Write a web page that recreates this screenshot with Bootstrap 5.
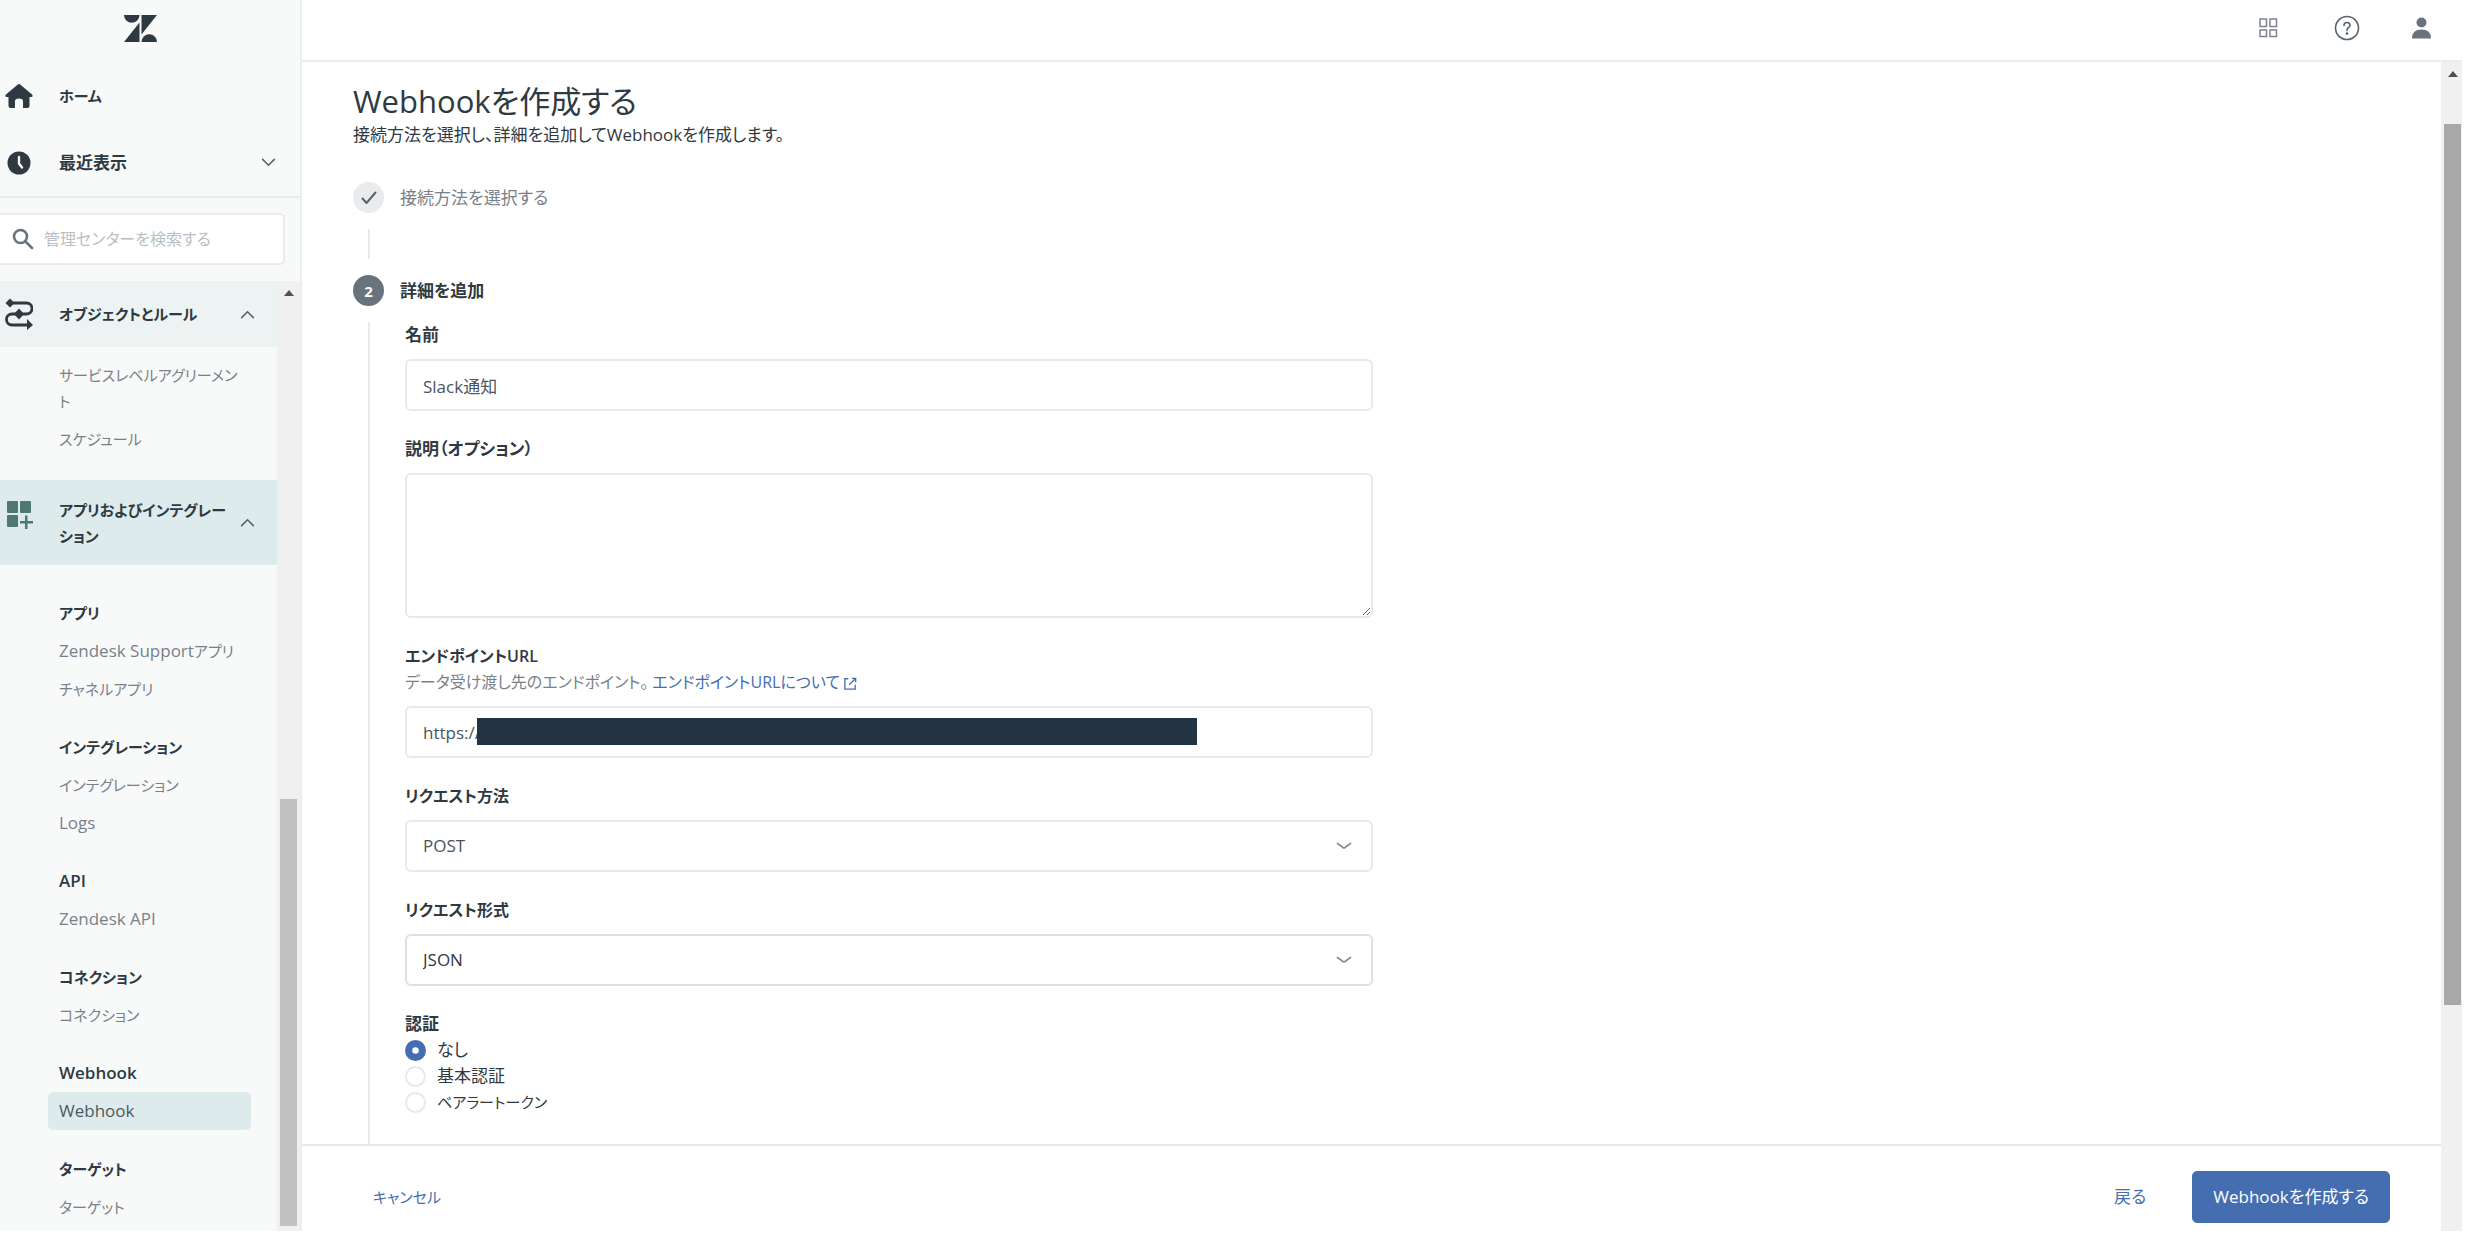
<!DOCTYPE html>
<html lang="ja">
<head>
<meta charset="utf-8">
<meta name="viewport" content="width=device-width, initial-scale=1">
<title>Webhookを作成する</title>
<link rel="stylesheet" href="https://cdn.jsdelivr.net/npm/bootstrap@5.3.0/dist/css/bootstrap.min.css">
<style>
  :root { --ink: #2f3941; --muted-ink: #78818a; --line: #e6eaea; --blue: #456eb0; }
  body { font-family: "Open Sans", "Noto Sans CJK JP", sans-serif; font-size: 17px; line-height: 26px; color: var(--ink); background: #fff; }
  body, input, select, textarea, button { font-feature-settings: "palt"; }
  a { text-decoration: none; }
  .kana { font-size: 15px; }
  .shell { height: 100vh; padding: 0 6px 11px 0; }

  /* sidebar */
  .side { width: 302px; background: #f8f9f9; border-right: 2px solid #ebeeef; }
  .brand { height: 56px; padding-left: 124px; }
  .side-link { color: var(--ink); font-weight: 600; height: 67px; padding: 0 24px 0 5px; gap: 26px; }
  .side-link svg, .group-row svg { flex: none; }
  .side-top { padding-top: 6px; height: 142px; border-bottom: 2px solid #e9ebed; }
  .search-wrap { padding: 15px 15px 16px 0; }
  .search-box { height: 52px; background: #fff; border: 2px solid #e9ecee; border-left: 0; border-radius: 0 5px 5px 0; padding-left: 12px; gap: 10px; }
  .search-box input { font-size: 16px; color: var(--ink); border: 0; outline: 0; padding: 0; min-width: 0; background: transparent; }
  .search-box input::placeholder { color: #b9bfc5; opacity: 1; }
  .group-row { color: var(--ink); font-size: 15px; font-weight: 600; padding: 0 22px 0 5px; background: #edf3f3; border: 0; text-align: left; min-height: 66px; }
  .group-row span { padding: 0 10px 0 26px; }
  .group-row.current { background: #deebec; min-height: 85px; }
  .side-list { padding: 29px 26px 0 48px; }
  .side-list-short { padding: 9px 36px 22px 48px; }
  .side-list a, .side-head { display: block; padding: 6px 0 6px 11px; line-height: 26px; border-radius: 5px; }
  .side-list a { color: var(--muted-ink); }
  .side-list a.active { background: #deebec; color: #4e5861; }
  .side-head { font-size: 17px; font-weight: 600; margin: 0; }
  .side-head.kana { font-size: 15px; }
  .side-sec + .side-sec { margin-top: 20px; }

  /* scroll tracks */
  .track { background: #f0f0f0; flex: none; }
  .track-side { width: 23px; padding: 9px 3px 5px; }
  .track-main { width: 21px; padding: 9px 1px 0 3px; }
  .track-side .thumb { background: #c1c1c1; flex: 427; }
  .track-side .before { flex: 503; }
  .track-main .thumb { background: #a8a8a8; flex: 881; }
  .track-main .before { flex: 47; }
  .track-main .after { flex: 226; }

  /* main */
  .topbar { height: 62px; border-bottom: 2px solid #ebeeef; padding: 0 31px 4px; }
  .icon-btn { border: 0; background: none; padding: 0; line-height: 0; }
  .content { padding: 18px 51px 0; overflow: hidden; }
  .page-title { font-size: 31px; line-height: 42px; font-weight: 400; margin: 0; }
  .step-first { color: var(--muted-ink); margin-top: 34px; }
  .step-mark { width: 31px; height: 31px; border-radius: 50%; font-size: 15px; font-weight: 700; }
  .step-done { background: #e9ebed; }
  .step-now { background: #68737d; color: #fff; }
  .step-gap { width: 2px; height: 30px; background: var(--line); margin: 16px 0 16px 15px; }
  .step-body { border-left: 2px solid var(--line); margin: 16px 0 0 15px; padding-left: 35px; }
  .fields { max-width: 968px; }
  .field-label { font-weight: 600; display: block; margin: 0; font-size: 17px; line-height: 26px; }
  .field-label.mixed { font-size: 16px; }
  .field { margin-bottom: 25px; }
  .field .form-control, .field .form-select { margin-top: 11px; height: 52px; border: 2px solid var(--line); border-radius: 6px; font-size: 17px; line-height: 26px; color: #49545c; padding: 8px 16px; }
  .field textarea.form-control { height: 145px; }
  .field .form-select { background-position: right 18px center; background-size: 18px 18px; background-image: url("data:image/svg+xml,%3Csvg xmlns='http://www.w3.org/2000/svg' viewBox='0 0 18 18'%3E%3Cpath d='M2.500 6.500L8 10.500Q9 11.200 10 10.500L15.500 6.500' fill='none' stroke='%23868e96' stroke-width='1.700' stroke-linecap='round'/%3E%3C/svg%3E"); }
  .field .form-select.strong-line { border-color: #dde0e1; color: var(--ink); }
  .hint { color: var(--muted-ink); font-size: 16px; }
  .hint a, .foot a { color: var(--blue); }
  .mask { left: 72px; width: 720px; max-width: calc(100% - 90px); top: 12px; height: 27px; background: #243342; }
  .auth .form-check { margin: 0; padding: 0; min-height: 26px; gap: 11px; }
  .auth .form-check-input { float: none; margin: 0; width: 21px; height: 21px; border: 2px solid var(--line); }
  .auth .form-check-input:checked { background-color: var(--blue); border-color: var(--blue); background-size: 13px 13px; }
  .foot { border-top: 2px solid var(--line); padding: 24px 51px 8px 71px; height: 87px; }
  .foot .back { margin-right: 46px; }
  .foot .btn-make { background: var(--blue); border-color: var(--blue); color: #fff; border-radius: 5px; font-size: 17px; line-height: 26px; padding: 12px 20px; }
</style>
</head>
<body>
<div class="shell d-flex">
  <aside class="side d-flex flex-column flex-shrink-0">
    <div class="brand d-flex align-items-center">
      <svg width="33" height="27" viewBox="0 0 33 27" fill="#2f3941" aria-label="Zendesk"><path d="M0 0H15.500A7.750 7.750 0 0 1 0 0ZM15.500 7.500V27H0ZM17.500 0H33L17.500 19.500ZM17.500 27A7.750 7.750 0 0 1 33 27Z"/></svg>
    </div>
    <nav class="side-top">
      <a href="#" class="side-link d-flex align-items-center">
        <svg width="28" height="24" viewBox="0 0 28 24" fill="#2f3941"><path d="M12.500 .700Q14-.500 15.500 .700L27.300 10.700Q28.200 13 26.500 13H24.500V22Q24.500 24 22.500 24H18V17Q18 14.500 14 14.500T10 17V24H5.500Q3.500 24 3.500 22V13H1.500Q-.200 13 .700 10.700Z"/></svg>
        <span class="kana">ホーム</span>
      </a>
      <a href="#" class="side-link d-flex align-items-center">
        <svg width="28" height="24" viewBox="0 0 28 24"><circle cx="14" cy="12" r="11.500" fill="#2f3941"/><path d="M14 6V12.500L17 16.500" fill="none" stroke="#f8f9f9" stroke-width="2.400" stroke-linecap="round"/></svg>
        <span class="flex-grow-1">最近表示</span>
        <svg width="15" height="9" viewBox="0 0 16 10"><path d="M1.500 1.500L8 8L14.500 1.500" fill="none" stroke="#59636d" stroke-width="1.800" stroke-linecap="round"/></svg>
      </a>
    </nav>
    <div class="search-wrap">
      <label class="search-box d-flex align-items-center">
        <svg class="flex-shrink-0" width="22" height="22" viewBox="0 0 22 22" fill="none" stroke="#68737d" stroke-width="2.600"><circle cx="8.500" cy="8.500" r="6.500"/><path d="M13.500 13.500L20 20" stroke-linecap="round"/></svg>
        <input type="search" class="flex-grow-1" placeholder="管理センターを検索する" aria-label="管理センターを検索する">
      </label>
    </div>
    <div class="d-flex flex-grow-1 overflow-hidden">
      <nav class="flex-grow-1 overflow-hidden">
        <button type="button" class="group-row d-flex align-items-center w-100">
          <svg width="28" height="32" viewBox="0 0 28 32"><g fill="none" stroke="#2f3941" stroke-width="2.800"><path d="M5 5H21.500A5.500 5.500 0 0 1 21.500 16H7A5.500 5.500 0 0 0 7 27H24"/></g><g fill="#2f3941"><path d="M5 .500L9.500 5L5 9.500L.500 5ZM14 10.500L19 16L14 21.500L9 16Z"/><path d="M22 21L28 27L22 32Z"/></g></svg>
          <span class="flex-grow-1">オブジェクトとルール</span>
          <svg width="15" height="9" viewBox="0 0 16 10"><path d="M1.500 8.500L8 2L14.500 8.500" fill="none" stroke="#59636d" stroke-width="1.800" stroke-linecap="round"/></svg>
        </button>
        <div class="side-list side-list-short">
          <a href="#" class="kana">サービスレベルアグリーメント</a>
          <a href="#" class="kana">スケジュール</a>
        </div>
        <button type="button" class="group-row current d-flex align-items-center w-100">
          <svg class="mb-3" width="28" height="28" viewBox="0 0 28 28" fill="#4f7875"><rect x="2" y="0" width="11" height="12" rx="1"/><rect x="15" y="0" width="11" height="12" rx="1"/><rect x="2" y="14" width="11" height="12" rx="1"/><path d="M20 14.500H22.500V20H28V22.500H22.500V28H20V22.500H15V20H20Z"/></svg>
          <span class="flex-grow-1">アプリおよびインテグレーション</span>
          <svg width="15" height="9" viewBox="0 0 16 10"><path d="M1.500 8.500L8 2L14.500 8.500" fill="none" stroke="#59636d" stroke-width="1.800" stroke-linecap="round"/></svg>
        </button>
        <div class="side-list">
          <section class="side-sec"><h2 class="side-head kana">アプリ</h2><a href="#">Zendesk Support<span class="kana">アプリ</span></a><a href="#" class="kana">チャネルアプリ</a></section>
          <section class="side-sec"><h2 class="side-head kana">インテグレーション</h2><a href="#" class="kana">インテグレーション</a><a href="#">Logs</a></section>
          <section class="side-sec"><h2 class="side-head">API</h2><a href="#">Zendesk API</a></section>
          <section class="side-sec"><h2 class="side-head kana">コネクション</h2><a href="#" class="kana">コネクション</a></section>
          <section class="side-sec"><h2 class="side-head">Webhook</h2><a href="#" class="active" aria-current="page">Webhook</a></section>
          <section class="side-sec"><h2 class="side-head kana">ターゲット</h2><a href="#" class="kana">ターゲット</a></section>
        </div>
      </nav>
      <div class="track track-side d-flex flex-column">
        <svg class="mx-auto" width="10" height="6" viewBox="0 0 10 6"><path d="M5 0L10 6H0Z" fill="#505050"/></svg>
        <div class="before"></div><div class="thumb"></div>
      </div>
    </div>
  </aside>

  <div class="d-flex flex-column flex-grow-1 overflow-hidden">
    <header class="topbar d-flex align-items-center justify-content-end gap-5 flex-shrink-0">
      <button type="button" class="icon-btn me-1" aria-label="製品"><svg width="19" height="20" viewBox="0 0 19 20" fill="none" stroke="#7b848d" stroke-width="1.500"><rect x="1" y="1" width="6.500" height="7.500"/><rect x="11" y="1" width="6.500" height="7.500"/><rect x="1" y="12" width="6.500" height="6.500"/><rect x="11" y="12" width="6.500" height="6.500"/></svg></button>
      <button type="button" class="icon-btn mx-1" aria-label="ヘルプ"><svg width="26" height="26" viewBox="0 0 26 26" fill="none" stroke="#59636d" stroke-width="1.600"><circle cx="13" cy="13" r="11.500"/><path d="M10 10.500Q10 7.500 13 7.500T16 10.200Q16 11.800 14.300 12.700T13 15.500" stroke-linecap="round"/><circle cx="13" cy="18.600" r=".600" fill="#59636d"/></svg></button>
      <button type="button" class="icon-btn" aria-label="プロフィール"><svg width="19" height="22" viewBox="0 0 19 22" fill="#68737d"><circle cx="9.500" cy="5.500" r="5"/><path d="M0 21.500Q0 12.500 9.500 12.500T19 21.500Z"/></svg></button>
    </header>
    <div class="d-flex flex-grow-1 overflow-hidden">
      <div class="d-flex flex-column flex-grow-1 overflow-hidden">
        <main class="content flex-grow-1 d-flex flex-column">
          <h1 class="page-title">Webhookを作成する</h1>
          <p class="mb-0">接続方法を選択し、詳細を追加してWebhookを作成します。</p>
          <div class="d-flex align-items-center gap-3 step-first">
            <span class="step-mark step-done d-flex align-items-center justify-content-center"><svg width="16" height="14" viewBox="0 0 16 14"><path d="M1.500 7.500L5.500 12L14.500 1.500" fill="none" stroke="#59636d" stroke-width="2" stroke-linecap="round" stroke-linejoin="round"/></svg></span>
            <span>接続方法を選択する</span>
          </div>
          <div class="step-gap flex-shrink-0"></div>
          <div class="d-flex align-items-center gap-3">
            <span class="step-mark step-now d-flex align-items-center justify-content-center">2</span>
            <span class="fw-semibold">詳細を追加</span>
          </div>
          <div class="step-body flex-grow-1">
            <form class="fields">
              <div class="field">
                <label class="field-label" for="hookName">名前</label>
                <input class="form-control" id="hookName" type="text" value="Slack通知">
              </div>
              <div class="field">
                <label class="field-label" for="hookDesc">説明（オプション）</label>
                <textarea class="form-control" id="hookDesc"></textarea>
              </div>
              <div class="field">
                <label class="field-label mixed" for="hookUrl">エンドポイントURL</label>
                <div class="hint">データ受け渡し先のエンドポイント。<a href="#" class="ms-1">エンドポイントURLについて <svg width="13" height="13" viewBox="0 0 15 15" fill="none" stroke="#456eb0" stroke-width="1.500"><path d="M5 2H1V14H13V9M6 9L13 2M9 1.500H13.500V6"/></svg></a></div>
                <div class="position-relative">
                  <input class="form-control" id="hookUrl" type="text" value="https://">
                  <span class="mask position-absolute"></span>
                </div>
              </div>
              <div class="field">
                <label class="field-label mixed" for="hookMethod">リクエスト方法</label>
                <select class="form-select" id="hookMethod"><option>POST</option></select>
              </div>
              <div class="field">
                <label class="field-label mixed" for="hookFormat">リクエスト形式</label>
                <select class="form-select strong-line" id="hookFormat"><option>JSON</option></select>
              </div>
              <fieldset class="auth">
                <legend class="field-label">認証</legend>
                <div class="form-check d-flex align-items-center"><input class="form-check-input" type="radio" name="auth" id="authNone" checked><label for="authNone">なし</label></div>
                <div class="form-check d-flex align-items-center"><input class="form-check-input" type="radio" name="auth" id="authBasic"><label for="authBasic">基本認証</label></div>
                <div class="form-check d-flex align-items-center"><input class="form-check-input" type="radio" name="auth" id="authBearer"><label class="kana" for="authBearer">ベアラートークン</label></div>
              </fieldset>
            </form>
          </div>
        </main>
        <footer class="foot d-flex align-items-center flex-shrink-0">
          <a href="#" class="kana">キャンセル</a>
          <a href="#" class="ms-auto back">戻る</a>
          <button type="button" class="btn btn-make">Webhookを作成する</button>
        </footer>
      </div>
      <div class="track track-main d-flex flex-column">
        <svg class="mx-auto flex-shrink-0" width="10" height="6" viewBox="0 0 10 6"><path d="M5 0L10 6H0Z" fill="#505050"/></svg>
        <div class="before"></div><div class="thumb"></div><div class="after"></div>
      </div>
    </div>
  </div>
</div>
<script src="https://cdn.jsdelivr.net/npm/bootstrap@5.3.0/dist/js/bootstrap.bundle.min.js"></script>
</body>
</html>
